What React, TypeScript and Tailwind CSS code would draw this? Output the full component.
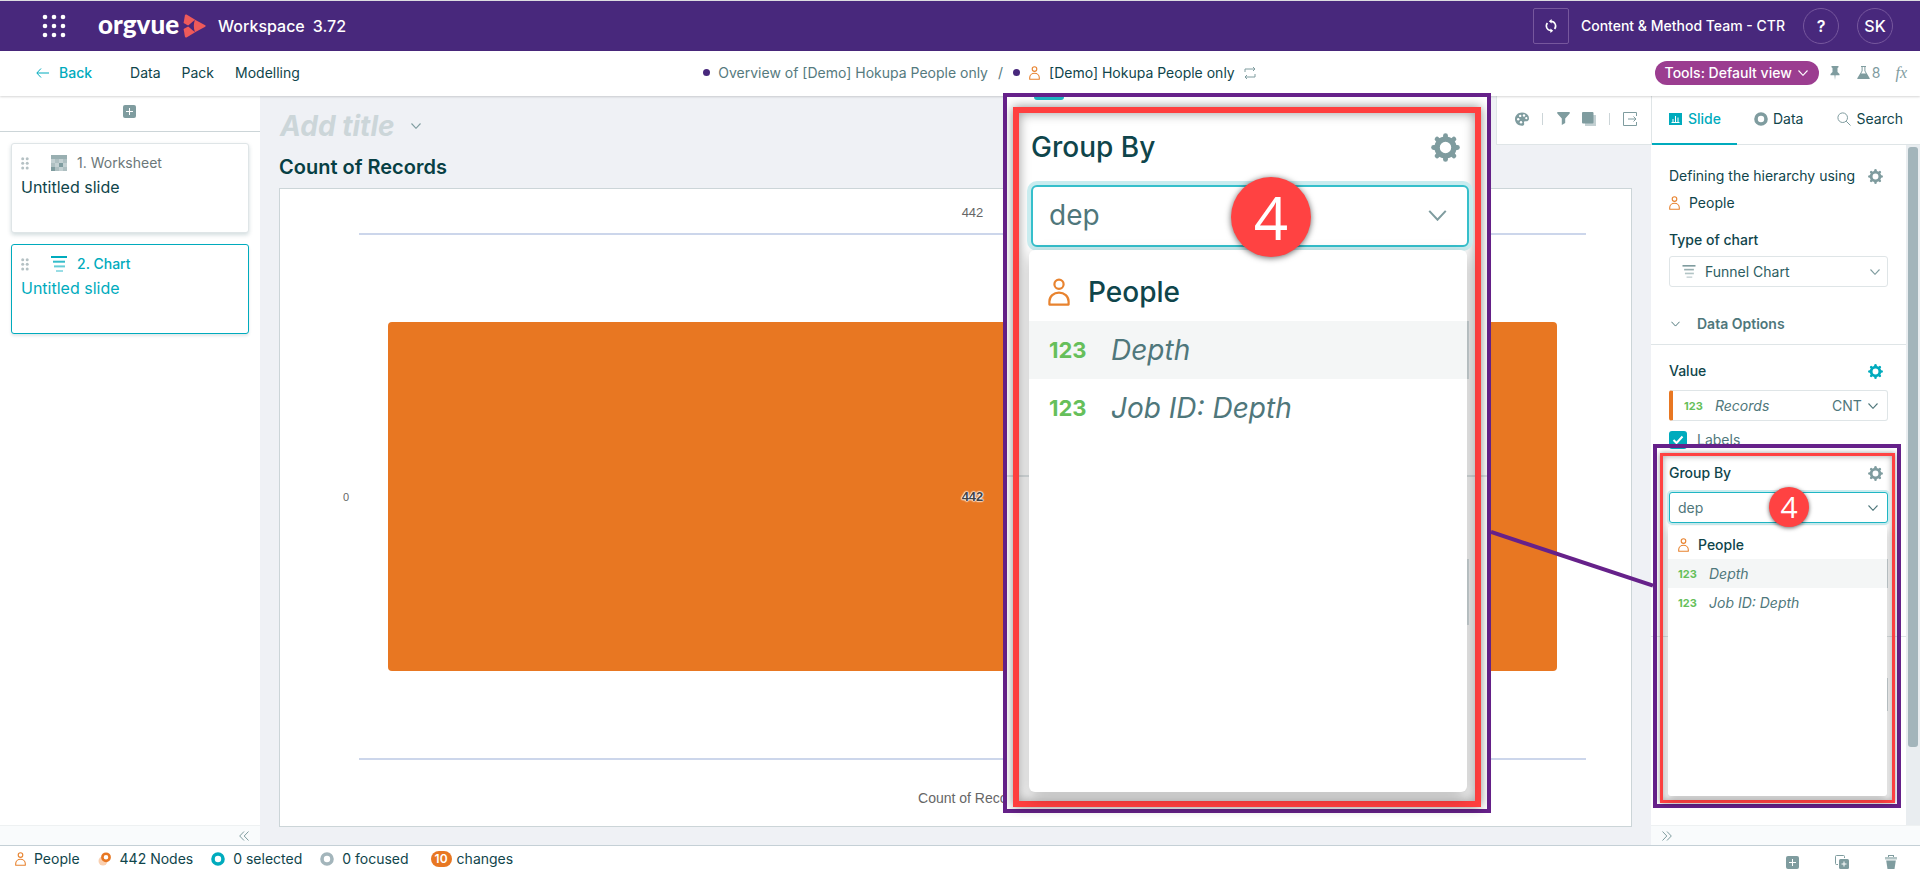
import { type ReactNode } from "react";

type IconProps = { className?: string };

const PersonIcon = ({ className = "h-[14px] w-[11px]" }: IconProps) => (
  <svg viewBox="0 0 11 14" className={className} fill="none" stroke="#e8832f" strokeWidth="1.1">
    <circle cx="5.5" cy="3.1" r="2.3" />
    <path d="M.7 13.3v-1.6a4.8 4.4 0 0 1 9.6 0v1.6z" strokeLinejoin="round" />
  </svg>
);

const GearIcon = ({ className = "h-[15px] w-[15px] text-[#7f9c9f]" }: IconProps) => (
  <svg viewBox="0 0 30 30" className={className} fill="none" stroke="currentColor">
    <circle cx="15" cy="15" r="8.7" strokeWidth="5.6" />
    {[0, 45, 90, 135, 180, 225, 270, 315].map((angle) => (
      <path key={angle} d="M15 5V2.700" strokeWidth="5" strokeLinecap="round" transform={`rotate(${angle} 15 15)`} />
    ))}
  </svg>
);

const ChevronIcon = ({ className = "h-[6px] w-[10px]" }: IconProps) => (
  <svg viewBox="0 0 10 6" className={className} fill="none" stroke="currentColor" strokeWidth="1.1">
    <path d="M.5.5 5 5.3 9.5.5" />
  </svg>
);

const DoubleChevronIcon = ({ className = "" }: IconProps) => (
  <svg viewBox="0 0 10 10" className={`h-[10px] w-[10px] ${className}`} fill="none" stroke="#7f9c9f">
    <path d="M5 .5.7 5 5 9.5M9.5.5 5.2 5l4.3 4.5" />
  </svg>
);

const PlusSquareIcon = () => (
  <svg viewBox="0 0 13 13" className="h-[13px] w-[13px]">
    <rect width="13" height="13" rx="2" fill="#7f9c9f" />
    <path d="M6.5 3v7M3 6.5h7" stroke="#fff" />
  </svg>
);

const FunnelChartIcon = ({ className = "h-4 w-4" }: IconProps) => (
  <svg viewBox="0 0 16 16" className={className} fill="currentColor">
    <path d="M0 0h16v2H0z" />
    <path d="M2 4.7h12v2H2z" opacity=".8" />
    <path d="M3 9.4h11v2H3z" opacity=".6" />
    <path d="M5 14h7v2H5z" opacity=".4" />
  </svg>
);

const WorksheetIcon = () => (
  <svg viewBox="0 0 16 16" className="h-4 w-4">
    <rect width="16" height="16" fill="#c3d0d2" />
    <path d="M0 0h16v4H0z" fill="#99afb1" />
    <path d="M4 4h4v4H4zM12 4h4v4h-4zM0 8h4v4H0zM4 12h4v4H4zM12 12h4v4h-4z" fill="#aebfc1" />
    <path d="M8 8h4v4H8zM0 12h4v4H0z" fill="#7f9c9f" />
  </svg>
);

const DragDots = () => (
  <svg viewBox="0 0 8 13" className="h-[13px] w-2" fill="#b5c1c4">
    {[1.7, 6.3, 10.9].map((y) => (
      <g key={y}>
        <circle cx="1.7" cy={y} r="1.5" />
        <circle cx="6.2" cy={y} r="1.5" />
      </g>
    ))}
  </svg>
);

const RingIcon = ({ className = "" }: IconProps) => (
  <svg viewBox="0 0 14 14" className={`h-[14px] w-[14px] ${className}`} fill="none" stroke="currentColor">
    <circle cx="7" cy="7" r="5" strokeWidth="3.6" />
  </svg>
);

const Header = () => (
  <header className="flex h-[51px] shrink-0 items-center border-t border-[#dcdce0] bg-[#48287c] text-white">
    <button aria-label="Apps" className="ml-[42px]">
      <svg viewBox="0 0 24 24" className="h-6 w-6" fill="#fff">
        {[3, 12, 21].map((y) =>
          [3, 12, 21].map((x) => <circle key={`${x}-${y}`} cx={x} cy={y} r="2.3" />),
        )}
      </svg>
    </button>
    <div className="ml-8 flex items-center">
      <span className="pb-1 font-['Lato'] text-[26px] leading-8 font-black">orgvue</span>
      <svg viewBox="0 0 23 24" className="ml-1 h-6 w-[23px]">
        <path d="M3.5.6Q2.2.2 1.9 1.5L.6 9 5.5 11.8 12.2 5.800z" fill="#ee5a5a" />
        <path d="M3.5 23.4q-1.3.4-1.6-.9L.6 15l4.9-2.8 6.7 6z" fill="#ee5a5a" />
        <path d="M12 5.8l10.2 5.5q.9.7 0 1.4L12 18.2Q9.600 12 12 5.800z" fill="#ee5a5a" />
        <path d="M4.800 12l6-5.200q-1.700 5.200 0 10.400z" fill="#48287c" />
      </svg>
    </div>
    <span className="ml-3 text-base font-medium">Workspace</span>
    <span className="ml-2 text-base font-medium">3.72</span>
    <div className="ml-auto flex items-center pr-[27px]">
      <button
        aria-label="Refresh"
        className="flex h-9 w-9 items-center justify-center rounded-xs border border-[#76579d]"
      >
        <svg viewBox="0 0 14 14" className="h-[14px] w-[14px]" fill="none" stroke="#fff" strokeWidth="1.6">
          <path d="M7 2.400a4.600 4.600 0 0 1 3.600 7.500M7 11.600a4.600 4.600 0 0 1-3.600-7.500" />
          <path d="M7.600 0v4.600L4.800 2.300zM6.400 9.400V14l2.800-2.300z" fill="#fff" stroke="none" />
        </svg>
      </button>
      <span className="mr-[18px] ml-3 text-sm font-medium">Content &amp; Method Team - CTR</span>
      <button className="h-9 w-9 rounded-full border border-[#76579d] text-base font-semibold">?</button>
      <button className="ml-[18px] h-9 w-9 rounded-full border border-[#76579d] text-base font-medium">SK</button>
    </div>
  </header>
);

const NavBar = () => (
  <nav className="z-10 flex h-[45px] shrink-0 items-center bg-white pb-[2px] text-sm shadow-[0_1px_2px_rgba(0,0,0,0.16)]">
    <div className="flex flex-1 items-center pl-9">
      <a href="#back" className="flex items-center gap-[10px] font-medium text-[#00abbd]">
        <svg viewBox="0 0 13 10" className="h-[10px] w-[13px]" fill="none" stroke="currentColor">
          <path d="M5 .5.8 5 5 9.500M1 5h12" />
        </svg>
        Back
      </a>
      <a href="#data" className="ml-[38px]">Data</a>
      <a href="#pack" className="ml-[21px]">Pack</a>
      <a href="#modelling" className="ml-[21px]">Modelling</a>
    </div>
    <div className="flex items-center pl-4">
      <span className="h-[7px] w-[7px] rounded-full bg-[#48287c]" />
      <a href="#overview" className="ml-2 text-[#557a7e]">Overview of [Demo] Hokupa People only</a>
      <span className="mx-[10px] text-[#557a7e]">/</span>
      <span className="h-[7px] w-[7px] rounded-full bg-[#48287c]" />
      <PersonIcon className="mx-[9px] h-[14px] w-[11px]" />
      <span>[Demo] Hokupa People only</span>
      <svg viewBox="0 0 12 12" className="ml-[9px] h-3 w-3" fill="none" stroke="#7f9c9f">
        <path d="M1 5V2h10M9 0l2 2-2 2M11 7v3H1M3 8l-2 2 2 2" />
      </svg>
    </div>
    <div className="flex flex-1 items-center justify-end pr-[13px] text-[#7f9c9f]">
      <button className="flex h-6 items-center rounded-full bg-[#9b3d90] pr-[11px] pl-[10px] font-medium text-white">
        Tools: Default view
        <ChevronIcon className="ml-[6px] h-[6px] w-[10px]" />
      </button>
      <button aria-label="Pin" className="ml-[11px]">
        <svg viewBox="0 0 10 14" className="h-[14px] w-[10px]" fill="currentColor">
          <path d="M1.500 0h7v1.300l-1 .6v4L9.500 8v1.200h-4L5 14l-.5-4.800h-4V8l2-2.100v-4l-1-.6z" />
        </svg>
      </button>
      <button className="ml-[17px] flex items-center gap-[2px]">
        <svg viewBox="0 0 13 13" className="h-[13px] w-[13px]" fill="currentColor">
          <path d="M4 0h5v1H4zM4.600 1v4L.3 12.200V13h12.400v-.8L8.400 5V1h-1v4l1.500 2.500h-4.800L5.600 5V1z" />
        </svg>
        8
      </button>
      <button className="ml-[15px] font-['Liberation_Serif'] text-base italic">fx</button>
    </div>
  </nav>
);

type SlideCardProps = { icon: ReactNode; label: string; active?: boolean };

const SlideCard = ({ icon, label, active }: SlideCardProps) => (
  <button
    className={
      active
        ? "flex h-[90px] w-full flex-col rounded-[3px] border border-[#00abbd] bg-white px-[9px] py-[9px] text-left text-[#00abbd] shadow-[0_2px_3px_rgba(0,60,70,0.12)]"
        : "flex h-[90px] w-full flex-col rounded-[3px] border border-[#dfe5e7] bg-white px-[9px] py-[9px] text-left shadow-[0_2px_4px_rgba(0,60,70,0.18)]"
    }
  >
    <span className="flex h-5 items-center text-sm">
      <DragDots />
      <span className="mr-[10px] ml-[22px]">{icon}</span>
      <span className={active ? "font-medium" : "text-[#6b7779]"}>{label}</span>
    </span>
    <span className="mt-[2px] text-base leading-6">Untitled slide</span>
  </button>
);

const SlideList = () => (
  <aside className="flex w-[260px] shrink-0 flex-col bg-white">
    <div className="flex h-9 items-center justify-center border-b border-[#ccd5d8] pr-[2px] pb-1">
      <button aria-label="Add slide">
        <PlusSquareIcon />
      </button>
    </div>
    <div className="flex flex-1 flex-col gap-[11px] p-[11px]">
      <SlideCard icon={<WorksheetIcon />} label="1. Worksheet" />
      <SlideCard icon={<FunnelChartIcon />} label="2. Chart" active />
    </div>
    <div className="flex h-5 items-center justify-end border-t border-[#eef1f2] bg-[#f9fbfc] pr-[11px]">
      <button aria-label="Collapse slides">
        <DoubleChevronIcon />
      </button>
    </div>
  </aside>
);

const ChartToolbar = () => (
  <div className="flex h-[49px] w-[155px] items-center border-b border-l border-[#dfe5e7] bg-white pb-[3px] pl-[18px] text-[#7f9c9f]">
    <button aria-label="Colours">
      <svg viewBox="0 0 14 14" className="h-[14px] w-[14px]">
        <path
          d="M7 .5C11 .5 14 3 14 6.200c0 2.300-1.500 3.300-3.300 3.100-1.500-.1-2 .6-1.600 1.900.4 1.500-.5 2.500-2.100 2.500C3.300 13.700 0 10.900 0 7.200 0 3.400 3 .5 7 .5z"
          fill="currentColor"
        />
        <g fill="#fff">
          <circle cx="3.2" cy="7.2" r="1.2" />
          <circle cx="5.2" cy="3.9" r="1.2" />
          <circle cx="9" cy="3.5" r="1.2" />
          <circle cx="11.3" cy="6.2" r="1.1" />
          <circle cx="6" cy="10.3" r="1.2" />
        </g>
      </svg>
    </button>
    <span className="mr-[14px] ml-[13px] h-3 w-px bg-[#ccd5d8]" />
    <button aria-label="Filter">
      <svg viewBox="0 0 13 13" className="h-[13px] w-[13px]" fill="currentColor">
        <path d="M.3 0h12.400v1.500L8.200 6.500V11l-3.400 2V6.500L.3 1.500z" />
      </svg>
    </button>
    <button aria-label="Layers" className="ml-3">
      <svg viewBox="0 0 14 14" className="h-[14px] w-[14px]">
        <path d="M3 3h11v11H3z" fill="#c3d0d2" />
        <rect width="11.5" height="11.5" rx="1" fill="currentColor" />
      </svg>
    </button>
    <span className="mx-[13px] h-3 w-px bg-[#ccd5d8]" />
    <button aria-label="Export">
      <svg viewBox="0 0 14 14" className="h-[14px] w-[14px]" fill="none" stroke="currentColor">
        <path d="M13.500 4V.5H.5v13h13V10M5 7h8M10.500 4.500 13 7l-2.500 2.500" />
      </svg>
    </button>
  </div>
);

const FunnelChart = () => (
  <div className="flex flex-1 border border-[#ccd5d8] bg-white pr-[45px] text-center font-['Liberation_Sans',sans-serif] text-[13px] leading-4 text-[#666]">
    <div className="flex w-[79px] items-center justify-end pr-[10px] pb-[22px] text-[11px]">0</div>
    <div className="flex flex-1 flex-col">
      <div className="h-[46px] border-b-2 border-[#ccd6eb] pt-4">442</div>
      <div className="flex flex-1 px-[29px] py-[87px]">
        <div className="flex flex-1 items-center justify-center rounded-[4px] bg-[#e87722]">
          <span className="font-bold text-[#444] [text-shadow:0_0_2px_#fff,0_0_2px_#fff,0_0_2px_#fff,0_0_1px_#fff,0_0_1px_#fff]">
            442
          </span>
        </div>
      </div>
      <div className="h-[68px] border-t-2 border-[#ccd6eb] pt-[30px] text-sm leading-4">Count of Records</div>
    </div>
  </div>
);

const ChartArea = () => (
  <main className="flex flex-1 flex-col pb-[18px]">
    <div className="flex h-14 items-start justify-between">
      <button className="mt-3 ml-5 flex items-center gap-4 text-[28px] leading-9 font-bold text-[#ccd6d9] italic">
        Add title
        <ChevronIcon className="h-[6px] w-[10px] text-[#7f9c9f]" />
      </button>
      <ChartToolbar />
    </div>
    <h2 className="h-9 pl-[19px] text-xl leading-[30px] font-semibold text-[#073f44]">Count of Records</h2>
    <div className="mx-[19px] flex flex-1">
      <FunnelChart />
    </div>
  </main>
);

const NumberTag = ({ className = "w-5 text-[11px]" }: IconProps) => (
  <span className={`shrink-0 font-bold text-[#66bf5b] not-italic ${className}`}>123</span>
);

// Frame and step number drawn over the field being explained
const StepBadge = ({ large }: { large?: boolean }) => (
  <span
    className={
      large
        ? "absolute top-[80px] left-[224px] z-30 flex h-20 w-20 items-center justify-center rounded-full bg-[#ff4242] font-['Open_Sans'] text-[60px] text-white shadow-[0_1px_6px_rgba(0,0,0,0.6)]"
        : "absolute top-[26px] left-[100px] z-30 flex h-10 w-10 items-center justify-center rounded-full bg-[#ff4242] font-['Open_Sans'] text-[30px] text-white shadow-[0_1px_4px_rgba(0,0,0,0.6)]"
    }
  >
    4
  </span>
);

const SmallCallout = () => (
  <div className="pointer-events-none absolute -top-[17px] -left-[16px] h-[364px] w-[248px] border-4 border-[#66218a] p-[3px] pt-[5px]">
    <div className="h-[350px] w-[235px] border-[3px] border-[#ff4242] shadow-[0_0_5px_rgba(0,0,0,0.4),inset_0_0_6px_rgba(0,0,0,0.35)]" />
  </div>
);

const PropertiesPanel = () => (
  <aside className="flex w-[269px] shrink-0 flex-col bg-white">
    <div className="flex h-[49px] shrink-0 border-b border-l border-[#dfe5e7]">
      <button className="-mb-px flex w-[85px] items-center gap-[6px] border-b-2 border-[#00abbd] pb-[2px] pl-[17px] font-medium text-[#00abbd]">
        <svg viewBox="0 0 13 12" className="h-3 w-[13px]">
          <path d="M0 0h13v12H0z" fill="currentColor" />
          <path d="M2.500 9.500h8M4 9V6M6.500 9V3M9 9V4.500" stroke="#fff" />
        </svg>
        Slide
      </button>
      <button className="ml-[17px] flex items-center gap-[5px] pb-[3px]">
        <RingIcon className="text-[#7f9c9f]" />
        Data
      </button>
      <button className="ml-[34px] flex items-center gap-[5px] pb-[3px]">
        <svg viewBox="0 0 14 14" className="h-[14px] w-[14px]" fill="none" stroke="#7f9c9f">
          <circle cx="5.7" cy="5.7" r="4.8" />
          <path d="m9.200 9.200 4.300 4.300" />
        </svg>
        Search
      </button>
    </div>
    <div className="flex min-h-0 flex-1">
      <div className="flex-1 overflow-hidden pt-[19px] leading-6">
        <div className="px-[18px]">
          <div className="flex items-center justify-between pr-[5px]">
            Defining the hierarchy using
            <button aria-label="Hierarchy settings">
              <GearIcon />
            </button>
          </div>
          <div className="mt-[3px] flex items-center gap-[9px]">
            <PersonIcon />
            People
          </div>
          <label htmlFor="chart-type" className="mt-[13px] block font-medium">Type of chart</label>
          <div className="mt-1 flex h-[31px] items-center rounded-[3px] border border-[#dfe5e7] pr-[7px] pl-3 text-[#7f9c9f]">
            <FunnelChartIcon className="h-[13px] w-[14px]" />
            <select id="chart-type" className="ml-[9px] flex-1 appearance-none text-[#2c5d62]">
              <option>Funnel Chart</option>
            </select>
            <ChevronIcon />
          </div>
        </div>
        <button className="mt-[25px] flex h-[33px] w-full items-center gap-[17px] border-b border-[#dfe5e7] pb-2 pl-5 font-semibold text-[#4f777b]">
          <ChevronIcon className="h-[6px] w-[9px]" />
          Data Options
        </button>
        <div className="px-[18px]">
          <div className="mt-[14px] flex items-center justify-between pr-[5px] font-medium">
            Value
            <button aria-label="Value settings">
              <GearIcon className="h-[15px] w-[15px] text-[#00abbd]" />
            </button>
          </div>
          <div className="mt-[7px] flex h-[31px] items-center rounded-[3px] border border-l-4 border-[#dfe5e7] border-l-[#e87722] pr-[9px] pl-[11px] text-[#4f777b]">
            <NumberTag />
            <span className="ml-[11px] italic">Records</span>
            <select aria-label="Aggregation" className="mr-[6px] ml-auto appearance-none">
              <option>CNT</option>
            </select>
            <ChevronIcon />
          </div>
          <label className="mt-[7px] flex items-center gap-[10px] text-[#4f777b]">
            <span className="relative flex h-[18px] w-[18px]">
              <input type="checkbox" defaultChecked className="h-[18px] w-[18px] appearance-none rounded-[3px] bg-[#00abbd]" />
              <svg viewBox="0 0 18 18" className="absolute inset-0 h-[18px] w-[18px]" fill="none" stroke="#fff" strokeWidth="2">
                <path d="m4.500 9 3 3 6-6.500" />
              </svg>
            </span>
            Labels
          </label>
        </div>
        <div className="relative mx-[18px] mt-[9px]">
          <SmallCallout />
          <div className="relative flex items-center justify-between pr-[5px] font-medium">
            <label htmlFor="group-by">Group By</label>
            <button aria-label="Group settings">
              <GearIcon />
            </button>
          </div>
          <div className="relative mt-[7px] flex h-[31px] items-center rounded-[3px] border border-[#1fb6c4] bg-white pr-[9px] pl-2 text-[#4f777b] ring-2 ring-[#c9ecef]">
            <input id="group-by" defaultValue="dep" className="w-full min-w-0 outline-none" />
            <ChevronIcon className="h-[6px] w-[10px] shrink-0" />
          </div>
          <ul className="absolute top-[65px] right-px -left-px z-20 h-[270px] rounded-[3px] bg-white pt-1 shadow-[0_4px_10px_rgba(0,0,0,0.2)]">
            <li className="flex h-[29px] items-center gap-[9px] pl-[10px] font-medium">
              <PersonIcon />
              People
            </li>
            <li className="flex h-[29px] items-center gap-[11px] bg-[#f4f6f6] pl-[10px] text-[#4f777b] italic">
              <NumberTag />
              Depth
            </li>
            <li className="flex h-[29px] items-center gap-[11px] pl-[10px] text-[#4f777b] italic">
              <NumberTag />
              Job ID: Depth
            </li>
          </ul>
          <StepBadge />
          <div className="mt-9 h-[29px] border border-[#ccd5d8]" />
        </div>
        <div className="mt-12 border-b border-[#dfe5e7]" />
        <div className="mx-[18px] mt-[41px] h-[33px] border border-[#ccd5d8]" />
      </div>
      <div className="w-[14px] bg-[#e9edf0] px-[2px] pt-[2px]">
        <div className="h-[600px] rounded-[3px] bg-[#a3b5bb]" />
      </div>
    </div>
    <div className="flex h-5 shrink-0 items-center border-t border-[#eef1f2] bg-[#f9fbfc] pl-[11px]">
      <button aria-label="Collapse panel">
        <DoubleChevronIcon className="rotate-180" />
      </button>
    </div>
  </aside>
);

const LargeCallout = () => (
  <section className="absolute top-[93px] right-[429px] z-20 h-[720px] w-[488px] border-4 border-[#66218a] bg-white text-[28px] leading-[58px]">
    <div className="absolute top-0 left-[27px] h-[3px] w-[30px] rounded-b-sm bg-[#1fb6c4]" />
    <div className="absolute top-[378px] h-[2px] w-full bg-[#dfe5e7]" />
    <div className="absolute inset-x-[6px] top-[10px] bottom-[2px] border-[6px] border-[#ff3f3f] shadow-[0_0_10px_rgba(0,0,0,0.45),inset_0_0_12px_rgba(0,0,0,0.4)]" />
    <div className="relative mt-[21px] mr-[18px] ml-6">
      <div className="flex items-center justify-between pr-[9px] font-medium">
        <label htmlFor="group-by-large">Group By</label>
        <button aria-label="Group settings">
          <GearIcon className="h-[29px] w-[29px] text-[#7f9c9f]" />
        </button>
      </div>
      <div className="mt-[9px] flex h-[62px] items-center rounded-[6px] border-2 border-[#35bfcb] bg-white pr-[20px] pb-[2px] pl-4 text-[#4f777b] ring-4 ring-[#c9ecef]">
        <input id="group-by-large" defaultValue="dep" className="w-full min-w-0 outline-none" />
        <ChevronIcon className="h-[11px] w-[19px] shrink-0 text-[#7f9c9f]" />
      </div>
      <div className="absolute top-[203px] right-0 h-[58px] w-[2px] bg-[#ccd5d8]" />
      <div className="absolute top-[441px] right-0 h-[66px] w-[2px] bg-[#ccd5d8]" />
      <ul className="absolute top-[132px] right-[2px] -left-[2px] h-[542px] rounded-[6px] bg-white pt-[13px] shadow-[0_6px_16px_rgba(0,0,0,0.25)]">
        <li className="flex h-[58px] items-center gap-[18px] pl-[19px] font-medium">
          <PersonIcon className="h-7 w-[22px]" />
          People
        </li>
        <li className="flex h-[58px] items-center gap-[22px] bg-[#f4f6f6] pl-5 text-[#4f777b] italic">
          <NumberTag className="w-10 text-[22px]" />
          Depth
        </li>
        <li className="flex h-[58px] items-center gap-[22px] pl-5 text-[#4f777b] italic">
          <NumberTag className="w-10 text-[22px]" />
          Job ID: Depth
        </li>
      </ul>
    </div>
    <div className="absolute inset-0">
      <StepBadge large />
    </div>
  </section>
);

// Line joining the two callouts
const Connector = () => (
  <svg viewBox="0 0 162 60" className="absolute top-[529px] right-[267px] z-20 h-[60px] w-[162px]">
    <path d="M0 3 162 56.500" stroke="#66218a" strokeWidth="4" />
  </svg>
);

const StatusBar = () => (
  <footer className="flex h-[33px] shrink-0 items-center border-t border-[#c5d0d6] bg-white">
    <div className="flex items-center pb-[6px] pl-[15px]">
      <PersonIcon />
      <span className="ml-2">People</span>
      <svg viewBox="0 0 13 14" className="ml-[18px] h-[14px] w-[13px]" fill="none">
        <circle cx="5" cy="9" r="4.5" fill="#fad0b0" />
        <circle cx="8" cy="5.3" r="3.6" fill="#fff" stroke="#e87722" strokeWidth="2.6" />
      </svg>
      <span className="ml-[9px]">442 Nodes</span>
      <RingIcon className="ml-[18px] text-[#00abbd]" />
      <span className="ml-2">0 selected</span>
      <RingIcon className="ml-[18px] text-[#a3b5bb]" />
      <span className="ml-2">0 focused</span>
      <span className="ml-[22px] flex h-4 w-[21px] items-center justify-center rounded-full bg-[#e87722] text-xs font-semibold text-white">
        10
      </span>
      <span className="ml-[5px]">changes</span>
    </div>
    <div className="ml-auto flex items-center gap-9 pr-[23px]">
      <button aria-label="Add">
        <PlusSquareIcon />
      </button>
      <button aria-label="Duplicate">
        <svg viewBox="0 0 14 14" className="h-[14px] w-[14px]" fill="none">
          <path d="M3 9.500H1.500a1 1 0 0 1-1-1v-7a1 1 0 0 1 1-1h7a1 1 0 0 1 1 1V3" stroke="#7f9c9f" />
          <rect x="4" y="4" width="10" height="10" rx="1.5" fill="#7f9c9f" />
          <path d="M9 6.500v5M6.500 9h5" stroke="#fff" />
        </svg>
      </button>
      <button aria-label="Delete">
        <svg viewBox="0 0 12 14" className="h-[14px] w-3" fill="#7f9c9f">
          <path d="M3 0h6v2H8V1H4v1H3z" />
          <path d="M0 2h12v2.500H0z" opacity=".6" />
          <path d="M1.200 5.500h9.600L9.500 14h-7z" />
        </svg>
      </button>
    </div>
  </footer>
);

export default function App() {
  return (
    <div className="relative flex h-screen min-h-[878px] flex-col overflow-hidden font-['Inter',sans-serif] text-sm text-[#0f454b]">
      <Header />
      <NavBar />
      <div className="flex min-h-0 flex-1 bg-[#eff1f5]">
        <SlideList />
        <ChartArea />
        <PropertiesPanel />
      </div>
      <StatusBar />
      <LargeCallout />
      <Connector />
    </div>
  );
}
